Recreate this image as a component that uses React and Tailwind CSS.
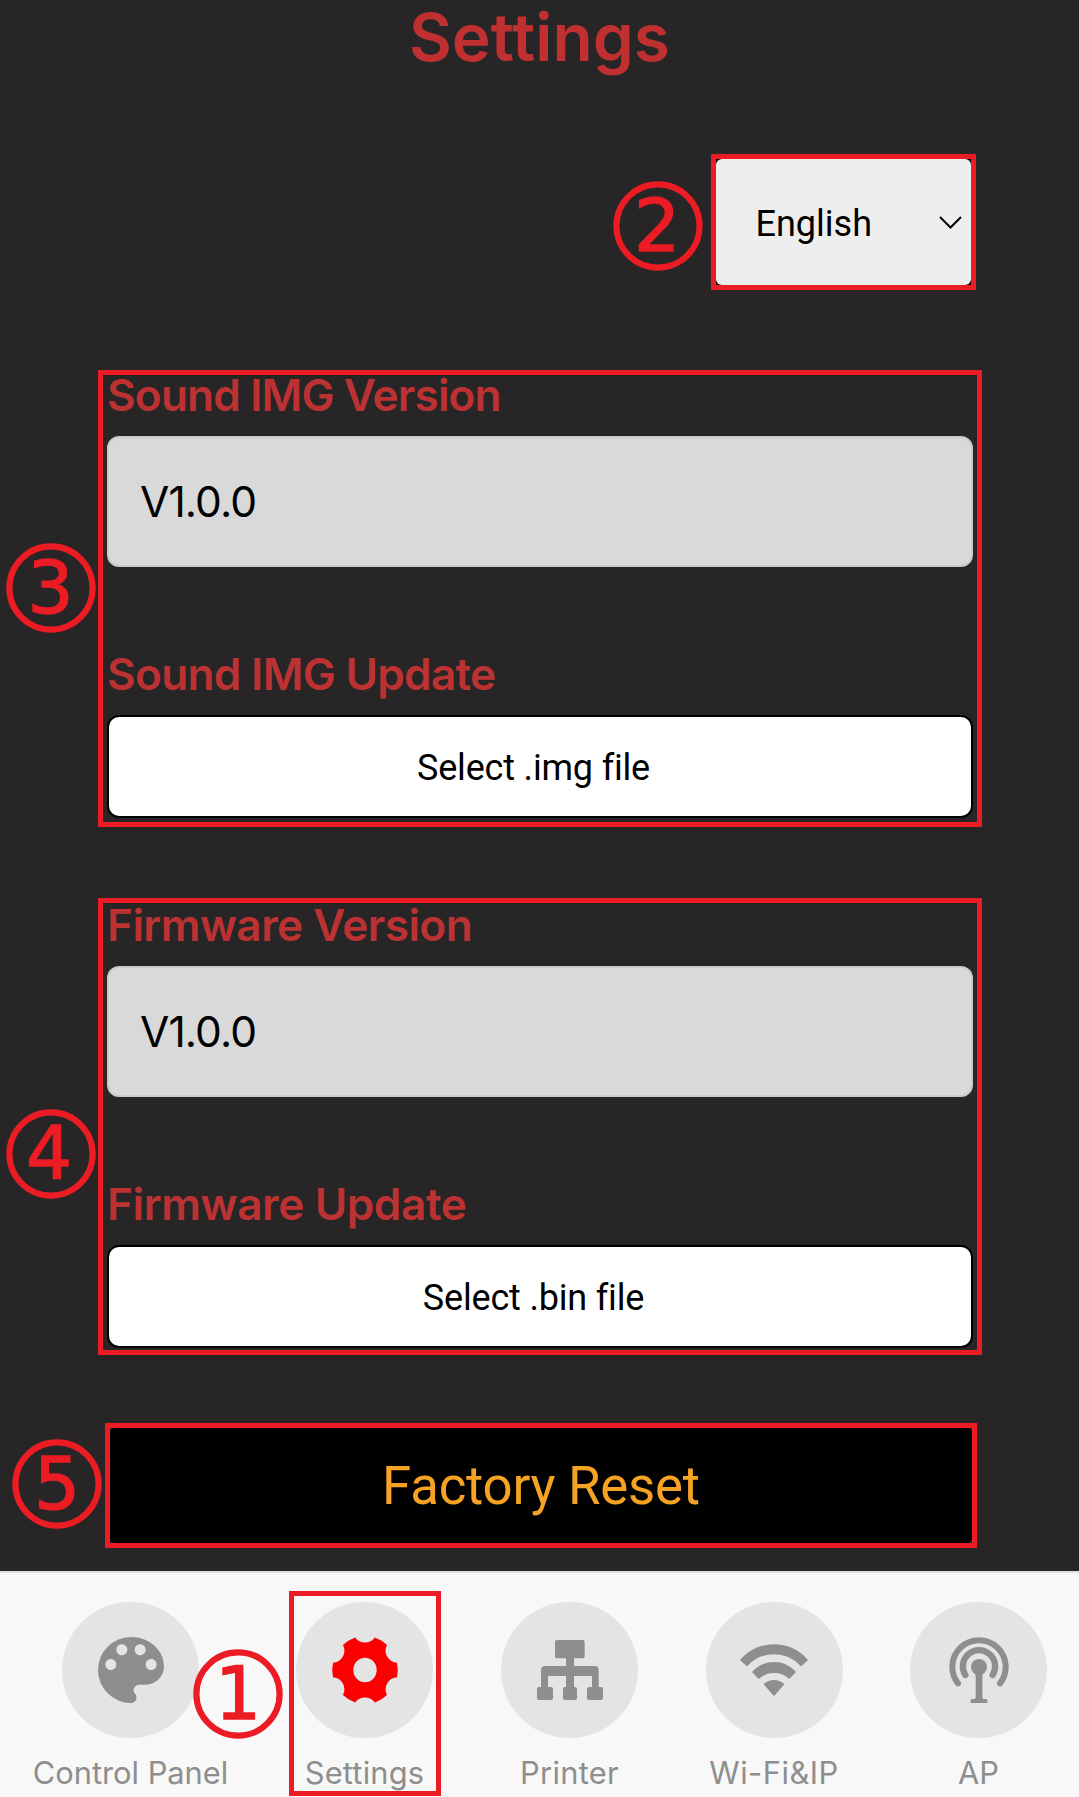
import React from "react";

const BADGES = [
  { n: "2", x: 613, y: 181, dx: -1 },
  { n: "3", x: 6, y: 543, dx: -0.5 },
  { n: "4", x: 6, y: 1109, dx: -2 },
  { n: "5", x: 12, y: 1439, dx: 0 },
  { n: "1", x: 193, y: 1649, dx: 0 },
];

function Badge({ n, x, y, dx }) {
  return (
    <svg className="absolute" style={{ left: x, top: y }} width="90" height="90" viewBox="0 0 90 90">
      <circle cx="45" cy="45" r="41.6" fill="none" stroke="#ec1c24" strokeWidth="6.2" />
      <text x={45 + dx} y="70" textAnchor="middle" fontSize="72.5" fill="#ec1c24" stroke="#ec1c24" strokeWidth="1.4" className="font-['DejaVu_Sans',sans-serif]">
        {n}
      </text>
    </svg>
  );
}

function Heading({ children, className }) {
  return (
    <h2 className={"whitespace-nowrap text-[44.2px] leading-[40px] font-semibold text-[#bc3233] " + className}>{children}</h2>
  );
}

function Version() {
  return (
    <div className="mt-[21px] flex h-[131px] items-center rounded-xl border-2 border-[#cbcbcb] bg-[#d9d9d9] pl-[31px] text-[42.5px] leading-[52px] tracking-[-0.9px] text-black">
      <span>V1.0.0</span>
    </div>
  );
}

function FileButton({ children }) {
  return (
    <button className="mt-[21px] flex h-[103px] w-full items-center justify-center rounded-xl border-2 border-black bg-white pt-0.5 pr-[13px] font-['Roboto',sans-serif] text-[36px] leading-[40px] tracking-[-0.18px] text-black">
      {children}
    </button>
  );
}

function Group({ version, update, file, className, trackA, trackB }) {
  return (
    <section className={"ml-[98px] w-[884px] shrink-0 border-[5px] border-[#ec1c24] px-1 " + className}>
      <Heading className={trackA}>{version}</Heading>
      <Version />
      <Heading className={"mt-[87px] " + trackB}>{update}</Heading>
      <FileButton>{file}</FileButton>
    </section>
  );
}

const Palette = () => (
  <svg className="h-[66px] w-[66px]" viewBox="3 3 18 18" fill="#8e8e8e">
    <path d="M12 3a9 9 0 0 0 0 18c.83 0 1.5-.67 1.5-1.5 0-.39-.15-.74-.39-1.01-.23-.26-.38-.61-.38-.99 0-.83.67-1.5 1.5-1.5H16c2.76 0 5-2.24 5-5 0-4.42-4.03-8-9-8zm-5.5 9c-.83 0-1.5-.67-1.5-1.5S5.67 9 6.5 9 8 9.67 8 10.5 7.33 12 6.5 12zm3-4C8.67 8 8 7.33 8 6.5S8.67 5 9.5 5s1.5.67 1.5 1.5S10.33 8 9.5 8zm5 0c-.83 0-1.5-.67-1.5-1.5S13.67 5 14.5 5s1.5.67 1.5 1.5S15.33 8 14.5 8zm3 4c-.83 0-1.5-.67-1.5-1.5S16.67 9 17.5 9s1.5.67 1.5 1.5-.67 1.5-1.5 1.5z" />
  </svg>
);

const Gear = () => (
  <svg className="h-[68px] w-[68px]" viewBox="-34 -34 68 68">
    <path
      fill="#fb0000"
      fillRule="evenodd"
      d="M32 -7.3A33.3 33.3 0 0 1 32 7.3A12 12 0 0 0 22 25A33.3 33.3 0 0 1 9.9 32.6A12.2 12.2 0 0 0 -9.9 32.6A33.3 33.3 0 0 1 -22 25A12 12 0 0 0 -32 7.3A33.3 33.3 0 0 1 -32 -7.3A12 12 0 0 0 -22 -25A33.3 33.3 0 0 1 -9.9 -32.6A12.2 12.2 0 0 0 9.9 -32.6A33.3 33.3 0 0 1 22 -25A12 12 0 0 0 32 -7.3ZM0 -12.2A11.7 12.2 0 0 0 0 12.2A11.7 12.2 0 0 0 0 -12.2Z"
    />
  </svg>
);

const Network = () => (
  <svg className="h-[60px] w-[66px]" viewBox="768 180 198 180" fill="#8e8e8e">
    <rect x="822" y="180" width="89" height="55" rx="6" />
    <rect x="855" y="230" width="24" height="95" />
    <path d="M780 325V270Q780 258 792 258H941Q953 258 953 270V325H933V288H801V325Z" />
    <rect x="768" y="321" width="48" height="39" rx="6" />
    <rect x="846" y="321" width="42" height="39" rx="6" />
    <rect x="918" y="321" width="48" height="39" rx="6" />
  </svg>
);

const Wifi = () => (
  <svg className="h-[52px] w-[68px]" viewBox="240 192 204 156" fill="#8e8e8e" stroke="#8e8e8e" strokeWidth="6" strokeLinejoin="round">
    <path d="M244 240A130 130 0 0 1 440 240L423 255A111 111 0 0 0 261 255Z" />
    <path d="M280 276A85 85 0 0 1 404 276L388 293A71 71 0 0 0 296 293Z" />
    <path d="M315 313Q327 303 342 303Q357 303 369 313L342 344Z" />
  </svg>
);

const Antenna = () => (
  <svg className="h-[66px] w-[60px]" viewBox="865 171 180 198" fill="none" stroke="#8e8e8e" strokeLinecap="round">
    <path strokeWidth="18" d="M892 310A80 80 0 1 1 1018 310" />
    <path strokeWidth="19" d="M914 285A48.5 48.5 0 1 1 996 285" />
    <circle cx="955" cy="261" r="24" fill="#8e8e8e" stroke="none" />
    <path fill="#8e8e8e" stroke="none" d="M943 275L945 290V353L942 357H934Q930 357 930 361V369H980V361Q980 357 976 357H968L965 353V290L967 275Z" />
  </svg>
);

function Tab({ label, width, labelClass, children, selected }) {
  return (
    <div className={"relative flex shrink-0 flex-col items-center " + width}>
      <div className="flex h-[136px] w-[137px] items-center justify-center rounded-full bg-[#e4e4e4]">{children}</div>
      <span className={"mt-[18px] whitespace-nowrap text-[30.8px] leading-[34px] text-[#8e8e8e] " + labelClass}>{label}</span>
      {selected && <div className="absolute -top-[11px] left-7 h-[205px] w-[152px] border-[5px] border-[#ec1c24]" />}
    </div>
  );
}

export default function App() {
  return (
    <div className="relative flex h-[1797px] w-[1079px] flex-col overflow-hidden bg-[#272526] font-['Inter',sans-serif]">
      <h1 className="shrink-0 text-center text-[65.8px] leading-[75px] font-semibold text-[#c13031]">Settings</h1>

      <div className="mt-[79px] ml-[711px] h-[136px] w-[265px] shrink-0 border-[5px] border-[#ec1c24] bg-black">
        <div className="flex h-full items-center justify-between rounded-[6px] bg-[#eeeeee] pr-[9px] pl-[39.5px]">
          <span className="pt-[3px] font-['Roboto',sans-serif] text-[36px] leading-[40px] text-black">English</span>
          <svg className="h-[13px] w-[23px]" viewBox="0 0 23 13" fill="none" stroke="black" strokeWidth="2">
            <path d="M1 1L11.5 11.5L22 1" />
          </svg>
        </div>
      </div>

      <Group
        className="mt-20 h-[457px]"
        version="Sound IMG Version"
        update="Sound IMG Update"
        file="Select .img file"
        trackA="tracking-[-0.88px]"
        trackB="tracking-[-0.72px]"
      />
      <Group
        className="mt-[71px] h-[457px] pt-0.5"
        version="Firmware Version"
        update="Firmware Update"
        file="Select .bin file"
        trackA="tracking-[-0.59px]"
        trackB="tracking-[-0.43px]"
      />

      <div className="mt-[68px] ml-[105px] h-[125px] w-[872px] shrink-0 border-[5px] border-[#ec1c24]">
        <button className="flex h-full w-full items-center justify-center rounded-[5px] bg-black font-['Roboto',sans-serif] text-[52.8px] leading-[60px] tracking-[-0.25px] text-[#f6a324]">
          Factory Reset
        </button>
      </div>

      <nav className="mt-[23px] flex h-[226px] shrink-0 border-t-2 border-[#dedede] bg-[#f8f8f8] pt-[29px]">
        <Tab label="Control Panel" width="w-[261px]" labelClass=""><Palette /></Tab>
        <Tab label="Settings" width="w-[207px]" labelClass="tracking-[0.2px]" selected><Gear /></Tab>
        <Tab label="Printer" width="w-[203px]" labelClass="tracking-[0.3px]"><Network /></Tab>
        <Tab label="Wi-Fi&IP" width="w-[206px]" labelClass="tracking-[0.5px]"><Wifi /></Tab>
        <Tab label="AP" width="w-[203px]" labelClass=""><Antenna /></Tab>
      </nav>

      {BADGES.map((b) => (
        <Badge key={b.n} {...b} />
      ))}
    </div>
  );
}
